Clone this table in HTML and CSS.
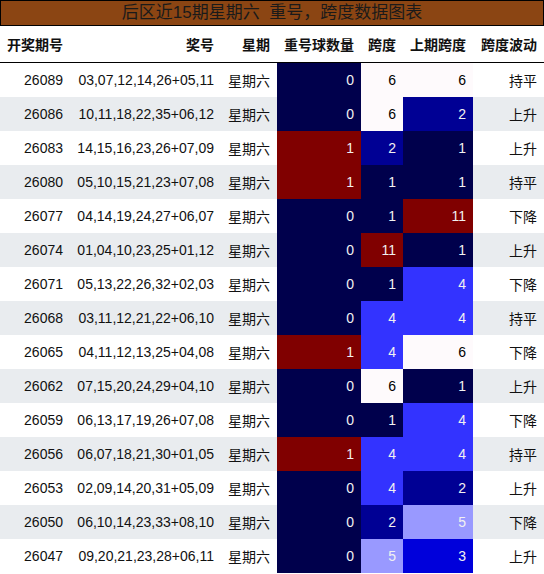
FILE: index.html
```html
<!DOCTYPE html>
<html lang="zh">
<head>
  <meta charset="UTF-8" />
  <title>后区近15期星期六 重号，跨度数据图表</title>
  <link rel="stylesheet" href="styles.css">
</head>
<body>

  <div class="title">后区近15期星期六&nbsp; 重号，跨度数据图表</div>

  <table>
    <colgroup>
      <col class="w-issue">
      <col class="w-nums">
      <col class="w-day">
      <col class="w-repeat">
      <col class="w-span">
      <col class="w-prev">
      <col class="w-trend">
    </colgroup>
    <thead>
      <tr>
        <th>开奖期号</th>
        <th>奖号</th>
        <th>星期</th>
        <th>重号球数量</th>
        <th>跨度</th>
        <th>上期跨度</th>
        <th>跨度波动</th>
      </tr>
    </thead>
    <tbody>
      <tr><td>26089</td><td>03,07,12,14,26+05,11</td><td>星期六</td><td class="g0">0</td><td class="g6">6</td><td class="g6">6</td><td>持平</td></tr>
      <tr><td>26086</td><td>10,11,18,22,35+06,12</td><td>星期六</td><td class="g0">0</td><td class="g6">6</td><td class="g2">2</td><td>上升</td></tr>
      <tr><td>26083</td><td>14,15,16,23,26+07,09</td><td>星期六</td><td class="g11">1</td><td class="g2">2</td><td class="g0">1</td><td>上升</td></tr>
      <tr><td>26080</td><td>05,10,15,21,23+07,08</td><td>星期六</td><td class="g11">1</td><td class="g0">1</td><td class="g0">1</td><td>持平</td></tr>
      <tr><td>26077</td><td>04,14,19,24,27+06,07</td><td>星期六</td><td class="g0">0</td><td class="g0">1</td><td class="g11">11</td><td>下降</td></tr>
      <tr><td>26074</td><td>01,04,10,23,25+01,12</td><td>星期六</td><td class="g0">0</td><td class="g11">11</td><td class="g0">1</td><td>上升</td></tr>
      <tr><td>26071</td><td>05,13,22,26,32+02,03</td><td>星期六</td><td class="g0">0</td><td class="g0">1</td><td class="g4">4</td><td>下降</td></tr>
      <tr><td>26068</td><td>03,11,12,21,22+06,10</td><td>星期六</td><td class="g0">0</td><td class="g4">4</td><td class="g4">4</td><td>持平</td></tr>
      <tr><td>26065</td><td>04,11,12,13,25+04,08</td><td>星期六</td><td class="g11">1</td><td class="g4">4</td><td class="g6">6</td><td>下降</td></tr>
      <tr><td>26062</td><td>07,15,20,24,29+04,10</td><td>星期六</td><td class="g0">0</td><td class="g6">6</td><td class="g0">1</td><td>上升</td></tr>
      <tr><td>26059</td><td>06,13,17,19,26+07,08</td><td>星期六</td><td class="g0">0</td><td class="g0">1</td><td class="g4">4</td><td>下降</td></tr>
      <tr><td>26056</td><td>06,07,18,21,30+01,05</td><td>星期六</td><td class="g11">1</td><td class="g4">4</td><td class="g4">4</td><td>持平</td></tr>
      <tr><td>26053</td><td>02,09,14,20,31+05,09</td><td>星期六</td><td class="g0">0</td><td class="g4">4</td><td class="g2">2</td><td>上升</td></tr>
      <tr><td>26050</td><td>06,10,14,23,33+08,10</td><td>星期六</td><td class="g0">0</td><td class="g2">2</td><td class="g5">5</td><td>下降</td></tr>
      <tr><td>26047</td><td>09,20,21,23,28+06,11</td><td>星期六</td><td class="g0">0</td><td class="g5">5</td><td class="g3">3</td><td>上升</td></tr>
    </tbody>
  </table>

</body>
</html>
```

FILE: styles.css
```css
body {
  margin: 0;
  font-family: "Liberation Sans", Arial, "Noto Sans CJK SC", sans-serif;
  font-size: 14px;
  color: #111;
  background: #fff;
}
.title {
  height: 24px;
  line-height: 24px;
  background-color: #8b4513;
  border: 1px solid #000;
  text-align: center;
  font-size: 17px;
  color: #1a1a1a;
}
table {
  width: 544px;
  border-collapse: collapse;
  table-layout: fixed;
}
.w-issue { width: 70px; }
.w-nums { width: 151px; }
.w-day { width: 56px; }
.w-repeat { width: 84px; }
.w-span { width: 42px; }
.w-prev { width: 70px; }
.w-trend { width: 71px; }
th, td {
  padding: 0 7px;
  text-align: right;
  white-space: nowrap;
}
th {
  height: 36px;
  font-weight: bold;
  border-bottom: 1px solid #000;
}
td {
  height: 34px;
}
tbody tr:nth-child(even) {
  background-color: #e9ecef;
}
.g0 { background-color: #00004c; color: #f1f1f1; }
.g2 { background-color: #000094; color: #f1f1f1; }
.g3 { background-color: #0000db; color: #f1f1f1; }
.g4 { background-color: #3333ff; color: #f1f1f1; }
.g5 { background-color: #9999ff; color: #f1f1f1; }
.g6 { background-color: #fefafc; color: #000; }
.g11 { background-color: #800000; color: #f1f1f1; }
```
